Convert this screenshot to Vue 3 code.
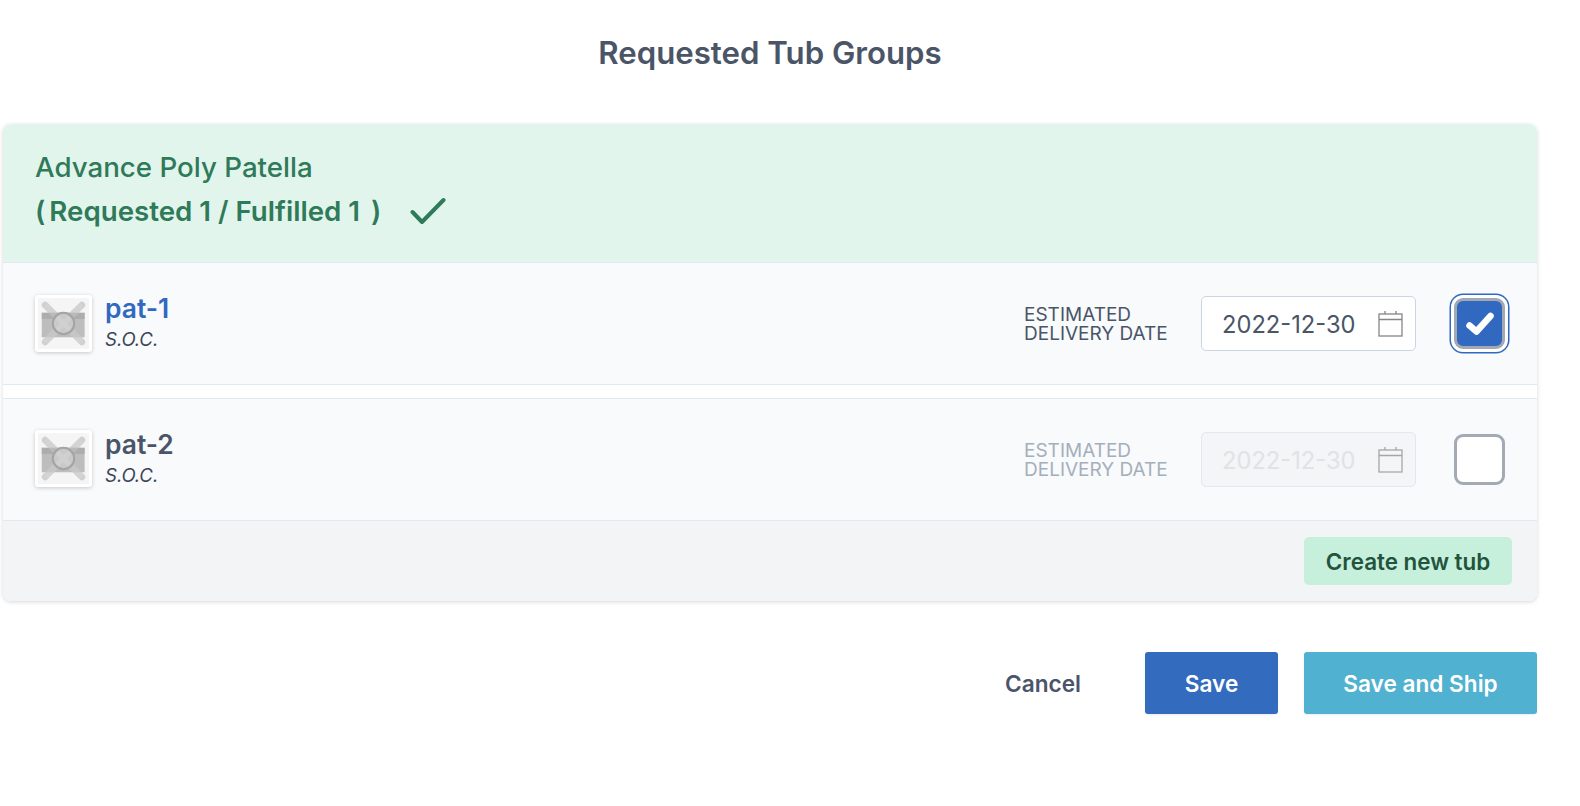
<script setup>
const tubs = [
  { name: 'pat-1', selected: true },
  { name: 'pat-2', selected: false },
]
</script>

<template>
  <div class="page">
    <h1 class="title">Requested Tub Groups</h1>
    <section class="card">
      <header class="head">
        <div class="head-line">Advance Poly Patella</div>
        <div class="head-line status">
          <span>(<span class="req">Requested 1 / Fulfilled 1</span>)</span>
          <svg class="tick" viewBox="0 0 36 28" fill="none" stroke="#2f7a58" stroke-width="4" stroke-linecap="round" stroke-linejoin="round"><path d="M2.500 15 L12 25 L33.500 3" /></svg>
        </div>
      </header>
      <div class="rows">
        <div v-for="t in tubs" :key="t.name" class="row" :class="{ off: !t.selected }">
          <div class="thumb">
            <svg viewBox="0 0 50 50" class="thumb-img">
              <rect width="50" height="50" fill="#f5f5f5" />
              <path d="M7 7 L43 43 M43 7 L7 43" stroke="#d0d0d0" stroke-width="6.500" stroke-linecap="round" />
              <rect x="3.700" y="14.500" width="42" height="24" fill="#bdbdbd" />
              <rect x="3.700" y="14.500" width="42" height="6" fill="#adadad" />
              <path d="M7 7 L43 43 M43 7 L7 43" stroke="#dcdcdc" stroke-width="6.500" stroke-opacity=".3" />
              <circle cx="25" cy="25" r="10.500" fill="#c9c9c9" stroke="#a4a4a4" stroke-width="2" />
              <path d="M19 19 L31 31 M31 19 L19 31" stroke="#d8d8d8" stroke-width="5" stroke-opacity=".5" />
            </svg>
          </div>
          <div class="info">
            <div class="name">{{ t.name }}</div>
            <div class="sub">S.O.C.</div>
          </div>
          <div class="label">ESTIMATED<br />DELIVERY DATE</div>
          <div class="date">
            <span class="date-text">2022-12-30</span>
            <svg class="cal" viewBox="0 0 25 27" fill="none" stroke="#868686" stroke-width="1.300"><rect x="1" y="4" width="23" height="22" /><path d="M1 9.500 H24 M7 1 V4 M18 1 V4" /></svg>
          </div>
          <div class="check-wrap">
            <div class="check">
              <svg v-if="t.selected" viewBox="0 0 28 23" class="check-mark" fill="none" stroke="#fff" stroke-width="6.500" stroke-linecap="round" stroke-linejoin="round"><path d="M3.500 13.500 L10.500 19.500 L24.500 4" /></svg>
            </div>
          </div>
        </div>
      </div>
      <footer class="foot">
        <button class="btn-new">Create new tub</button>
      </footer>
    </section>
    <div class="actions">
      <button class="btn cancel">Cancel</button>
      <button class="btn save">Save</button>
      <button class="btn ship">Save and Ship</button>
    </div>
  </div>
</template>

<style>
html, body { margin: 0; background: #fff; }
</style>

<style scoped>
.page {
  width: 1580px;
  height: 806px;
  overflow: hidden;
  box-sizing: border-box;
  padding: 33px 43px 0 3px;
  font-family: Inter, "Liberation Sans", sans-serif;
  color: #4a5568;
}
.title {
  margin: 0 0 51px;
  font-size: 31.200px;
  line-height: 40px;
  font-weight: 600;
  text-align: center;
  color: #4a5568;
}
.card {
  width: 1534px;
  height: 477px;
  box-sizing: border-box;
  display: flex;
  flex-direction: column;
  border-radius: 8px;
  overflow: hidden;
  background: #fff;
  box-shadow: 0 1px 4px rgba(0, 0, 0, .16);
}
.head {
  height: 139px;
  box-sizing: border-box;
  padding: 21px 32px 0;
  background: #e2f5ec;
  color: #2f7a58;
  font-size: 27.700px;
  font-weight: 500;
  border-bottom: 1px solid #e2e8f0;
}
.head-line { line-height: 44px; display: flex; align-items: center; }
.status { font-weight: 600; }
.req { margin: 0 11px 0 4px; }
.tick { width: 36px; height: 28px; margin-left: 29px; margin-bottom: 1px; }
.rows {
  display: flex;
  flex-direction: column;
  gap: 13px;
}
.row {
  height: 122px;
  box-sizing: border-box;
  display: flex;
  align-items: center;
  padding: 0 32px;
  background: #f8fafc;
  border-bottom: 1px solid #e2e8f0;
}
.row.off { height: 123px; border-top: 1px solid #e2e8f0; }
.thumb {
  width: 57px;
  height: 57px;
  box-sizing: border-box;
  padding: 3px;
  background: #fff;
  border-radius: 3px;
  box-shadow: 0 1px 4px rgba(0, 0, 0, .2);
  margin-right: 13px;
}
.off .thumb { margin-bottom: 3px; }
.thumb-img { display: block; width: 51px; height: 51px; }
.info { flex: 1; }
.name {
  font-size: 26.400px;
  line-height: 31px;
  font-weight: 600;
  color: #3069bf;
}
.off .name { color: #4a5568; }
.sub {
  font-size: 18.600px;
  line-height: 30px;
  font-style: italic;
  color: #3b4556;
}
.label {
  width: 177px;
  font-size: 19px;
  line-height: 19px;
  color: #4a5568;
}
.off .label { color: #a5afbb; }
.date {
  width: 215px;
  height: 55px;
  box-sizing: border-box;
  display: flex;
  align-items: center;
  justify-content: space-between;
  padding: 0 12px 0 20px;
  background: #fff;
  border: 1px solid #cbd5e0;
  border-radius: 5px;
  font-size: 23.700px;
  color: #4a5568;
}
.date-text { padding-top: 2px; }
.off .date {
  background: #f3f5f6;
  border-color: #e2e8f0;
  color: #dfe3e6;
}
.cal { width: 25px; height: 27px; }
.off .cal { opacity: .7; }
.check-wrap { margin-left: 38px; width: 51px; height: 51px; }
.off .check-wrap { margin-bottom: 1px; }
.check {
  width: 51px;
  height: 51px;
  box-sizing: border-box;
  display: flex;
  align-items: center;
  justify-content: center;
  background: #fff;
  border: 3.500px solid #a3a9b5;
  border-radius: 9px;
}
.row:not(.off) .check {
  background: #3069bf;
  border-color: #a3a9b3;
  box-shadow: 0 0 0 3px #fff, 0 0 0 4.500px #3069bf;
}
.check-mark { width: 28px; height: 23px; overflow: visible; }
.foot {
  flex: 1;
  display: flex;
  justify-content: flex-end;
  align-items: flex-start;
  padding: 16px 25px 0 0;
  background: #f3f4f6;
}
.btn-new {
  height: 48px;
  width: 208px;
  padding: 0;
  border: 0;
  border-radius: 5px;
  background: #c6efdc;
  color: #22543d;
  font: 600 22.400px Inter, "Liberation Sans", sans-serif;
}
.actions {
  width: 1534px;
  display: flex;
  justify-content: flex-end;
  align-items: center;
  margin-top: 51px;
  gap: 26px;
}
.btn {
  height: 62px;
  padding: 0;
  border: 0;
  border-radius: 3px;
  font: 600 22.600px Inter, "Liberation Sans", sans-serif;
  color: #fff;
}
.cancel { background: transparent; color: #4a5568; width: 76px; margin-right: 38px; }
.save { width: 133px; background: #336bbf; box-shadow: 0 1px 2px rgba(0,0,0,.08); }
.ship { width: 233px; background: #51b1d0; box-shadow: 0 1px 2px rgba(0,0,0,.08); }
</style>
